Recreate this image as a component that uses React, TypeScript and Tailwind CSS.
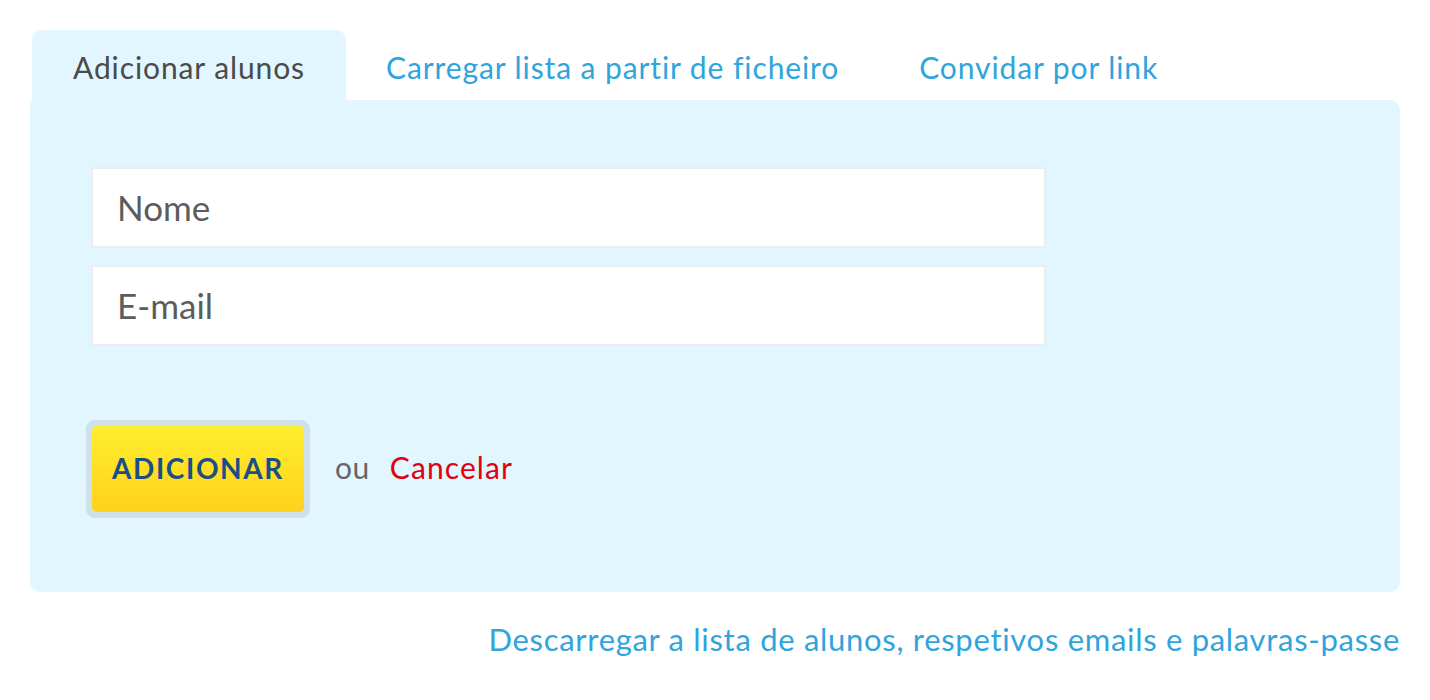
import { useState } from "react"

type Tab = { id: string; label: string }

const tabs: Tab[] = [
  { id: "add", label: "Adicionar alunos" },
  { id: "file", label: "Carregar lista a partir de ficheiro" },
  { id: "link", label: "Convidar por link" },
]

export default function App() {
  const [active, setActive] = useState("add")
  const [nome, setNome] = useState("")
  const [email, setEmail] = useState("")

  return (
    <div className="min-h-screen bg-white font-['Lato',sans-serif] pl-[30px] pr-[30px] pt-[30px]">
      {/* tabs */}
      <div className="flex h-[70px] pl-[2px]">
        {tabs.map((t) =>
          t.id === active ? (
            <button
              key={t.id}
              onClick={() => setActive(t.id)}
              className="h-full w-[314px] rounded-t-[10px] bg-[#e1f6fe] pt-[4px] text-[30px] tracking-[0.9px] text-[#4a4a4a]"
            >
              {t.label}
            </button>
          ) : (
            <button
              key={t.id}
              onClick={() => setActive(t.id)}
              className="h-full px-[40px] pt-[4px] text-[30px] tracking-[0.9px] text-[#2fa4dd]"
            >
              {t.label}
            </button>
          )
        )}
      </div>

      {/* panel */}
      <div className="h-[492px] rounded-b-[10px] rounded-tr-[10px] rounded-tl-[3px] bg-[#e1f6fe] pl-[61px] pt-[67px]">
        <div className="flex w-[955px] flex-col gap-[17px]">
          <input
            value={nome}
            onChange={(e) => setNome(e.target.value)}
            placeholder="Nome"
            className="h-[81px] border-2 border-[#ebeef0] bg-white px-[24px] pb-[2px] text-[35px] text-[#333] placeholder:text-[#5c5c5c] outline-none"
          />
          <input
            value={email}
            onChange={(e) => setEmail(e.target.value)}
            placeholder="E-mail"
            className="h-[81px] border-2 border-[#ebeef0] bg-white px-[24px] pb-[2px] text-[35px] text-[#333] placeholder:text-[#5c5c5c] outline-none"
          />
        </div>

        <div className="mt-[74px] flex items-center">
          <div className="ml-[-5px] rounded-[9px] bg-[#cfe0e7] p-[6px]">
            <button className="h-[86px] w-[212px] rounded-[5px] bg-gradient-to-b from-[#ffee2e] to-[#ffd11a] pb-[3px] text-[28px] font-bold tracking-[1.6px] text-[#1a4e86]">
              ADICIONAR
            </button>
          </div>
          <span className="ml-[25px] pb-[4px] text-[30px] tracking-[0.5px] text-[#666]">ou</span>
          <button className="ml-[20px] pb-[4px] text-[30px] tracking-[1.1px] text-[#e3000f]">Cancelar</button>
        </div>
      </div>

      <div className="mt-[24px] flex justify-end">
        <a href="#" className="text-[31px] tracking-[0.7px] text-[#2fa4dd]">
          Descarregar a lista de alunos, respetivos emails e palavras-passe
        </a>
      </div>
    </div>
  )
}
